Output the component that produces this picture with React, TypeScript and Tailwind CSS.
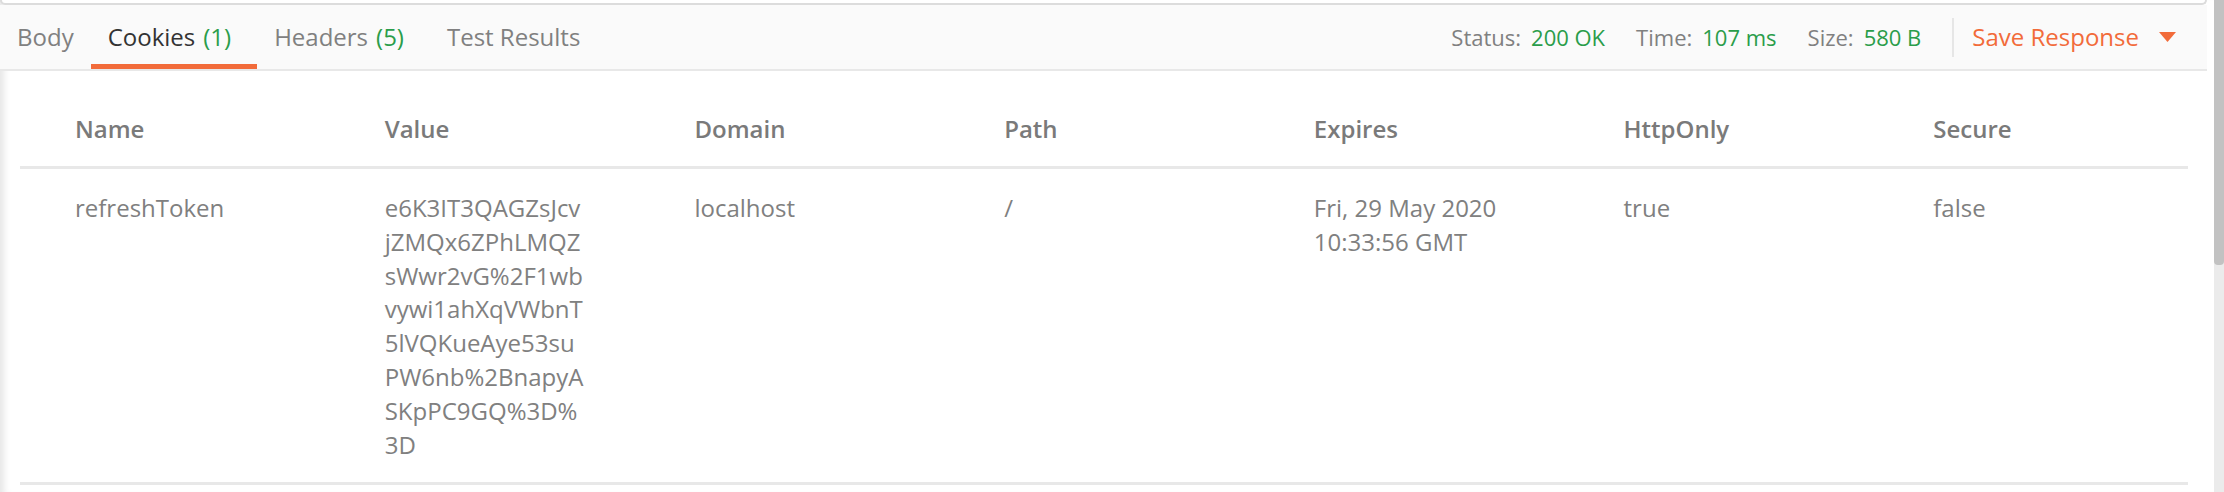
const columns = ['Name', 'Value', 'Domain', 'Path', 'Expires', 'HttpOnly', 'Secure'];

const tokenLines = [
  'e6K3IT3QAGZsJcv',
  'jZMQx6ZPhLMQZ',
  'sWwr2vG%2F1wb',
  'vywi1ahXqVWbnT',
  '5lVQKueAye53su',
  'PW6nb%2BnapyA',
  'SKpPC9GQ%3D%',
  '3D',
];

function Tab({ label, count, active, first }: { label: string; count?: number; active?: boolean; first?: boolean }) {
  return (
    <div
      className={`flex items-center pl-[17px] border-b-[5px] pt-[5px] ${first ? 'pr-[17px]' : 'pr-[26px]'} ${
        active ? 'border-[#f26b3a] text-[#333333]' : 'border-transparent text-[#808080]'
      }`}
    >
      {label}
      {count !== undefined && <span className="ml-[8px] text-[#2a9d4a]">({count})</span>}
    </div>
  );
}

function Stat({ label, value }: { label: string; value: string }) {
  return (
    <div className="flex items-center">
      <span className="text-[#808080]">{label}</span>
      <span className="ml-[10px] text-[#2a9d4a]">{value}</span>
    </div>
  );
}

export default function App() {
  return (
    <div className="flex h-[492px] w-[2224px] bg-white font-['Open_Sans',sans-serif] overflow-hidden">
      <div className="flex-1 flex flex-col shadow-[inset_9px_0_7px_-5px_rgba(0,0,0,0.10)]">
        <div className="mr-[7px] h-[5px] border-x-2 border-b-2 border-[#dcdcdc] rounded-b-[6px] bg-white" />
        <div className="mr-[7px] h-[66px] flex items-stretch justify-between bg-[#fafafa] border-b-2 border-[#e8e8e8] text-[24px] leading-[34px]">
          <div className="flex items-stretch">
            <Tab label="Body" first />
            <Tab label="Cookies" count={1} active />
            <Tab label="Headers" count={5} />
            <Tab label="Test Results" />
          </div>
          <div className="flex items-center pr-[31px]">
            <div className="flex items-center gap-[31px] text-[22px]">
              <Stat label="Status:" value="200 OK" />
              <Stat label="Time:" value="107 ms" />
              <Stat label="Size:" value="580 B" />
            </div>
            <div className="ml-[31px] w-[2px] h-[39px] bg-[#e6e6e6]" />
            <div className="ml-[18px] flex items-center text-[#f26b3a]">
              <span>Save Response</span>
              <svg className="ml-[20px]" width="17" height="10" viewBox="0 0 17 10">
                <path d="M0 0 H17 L8.5 10 Z" fill="#f26b3a" />
              </svg>
            </div>
          </div>
        </div>

        <div className="ml-[20px] mr-[26px] text-[24px] leading-[34px] text-[#808080]">
          <div className="grid grid-cols-7 pt-[41px] pb-[20px] border-b-[3px] border-[#e8e8e8] font-semibold text-[#7a7a7a]">
            {columns.map((c) => (
              <div key={c} className="pl-[55px]">
                {c}
              </div>
            ))}
          </div>
          <div className="grid grid-cols-7 pt-[22px] pb-[21px] border-b-[3px] border-[#e8e8e8] leading-[33.8px]">
            <div className="pl-[55px]">refreshToken</div>
            <div className="pl-[55px]">
              {tokenLines.map((l) => (
                <div key={l}>{l}</div>
              ))}
            </div>
            <div className="pl-[55px]">localhost</div>
            <div className="pl-[55px]">/</div>
            <div className="pl-[55px]">
              <div className="w-[200px]">Fri, 29 May 2020 10:33:56 GMT</div>
            </div>
            <div className="pl-[55px]">true</div>
            <div className="pl-[55px]">false</div>
          </div>
        </div>
      </div>
      <div className="w-[10px] flex flex-col bg-[#ebebeb]">
        <div className="h-[265px] bg-[#c2c2c2] rounded-b-[4px]" />
      </div>
    </div>
  );
}
